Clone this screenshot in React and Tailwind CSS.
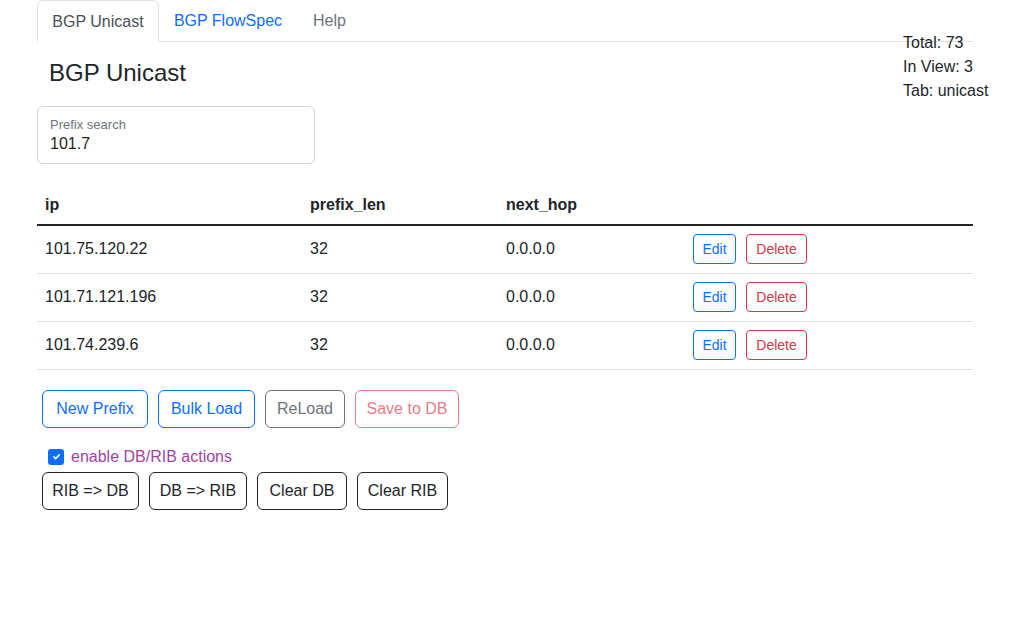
import React from 'react';

const rows = [
  { ip: '101.75.120.22', len: 32, hop: '0.0.0.0' },
  { ip: '101.71.121.196', len: 32, hop: '0.0.0.0' },
  { ip: '101.74.239.6', len: 32, hop: '0.0.0.0' },
];

const App = () => {
  return (
    <div className="relative min-h-[628px] bg-white text-[#212529] text-[16px] leading-6" style={{ fontFamily: '"Liberation Sans", Arial, sans-serif' }}>
      <div className="absolute left-[903px] top-[31px] leading-6">
        <div>Total: 73</div>
        <div>In View: 3</div>
        <div>Tab: unicast</div>
      </div>

      <div className="ml-[37px] w-[936px]">
        {/* tabs */}
        <div className="flex border-b border-[#dee2e6] h-[42px]">
          <div className="-mb-px w-[122px] h-[42px] pt-px flex items-center justify-center border border-[#dee2e6] border-b-white rounded-t-md text-[#495057] bg-white">BGP Unicast</div>
          <div className="w-[138px] h-[41px] pt-px flex items-center justify-center text-[#0d6efd]">BGP FlowSpec</div>
          <div className="h-[41px] pt-px px-4 flex items-center text-[#6c757d]">Help</div>
        </div>

        <h4 className="pl-3 mt-[17px] text-[24px] leading-[28px] font-medium">BGP Unicast</h4>

        <div className="mt-[19px] w-[278px] h-[58px] border border-[#ced4da] rounded-md px-3 pt-[10px]">
          <div className="text-[13px] leading-4 text-[#6c757d]">Prefix search</div>
          <div className="text-[16px] leading-6 -mt-[1px]">101.7</div>
        </div>

        {/* table */}
        <table className="mt-[21px] w-full border-collapse">
          <thead>
            <tr className="border-b-2 border-[#212529]">
              <th className="w-[265px] h-[40px] px-2 text-left font-bold">ip</th>
              <th className="w-[196px] px-2 text-left font-bold">prefix_len</th>
              <th className="w-[187px] px-2 text-left font-bold">next_hop</th>
              <th className="px-2"></th>
            </tr>
          </thead>
          <tbody>
            {rows.map((r) => (
              <tr key={r.ip} className="border-b border-[#dee2e6]">
                <td className="h-[48px] px-2">{r.ip}</td>
                <td className="px-2">{r.len}</td>
                <td className="px-2">{r.hop}</td>
                <td className="px-2">
                  <div className="flex gap-[10px]">
                    <button className="w-[43px] h-[30px] text-[14px] leading-5 border border-[#0d6efd] text-[#0d6efd] rounded">Edit</button>
                    <button className="w-[61px] h-[30px] text-[14px] leading-5 border border-[#dc3545] text-[#dc3545] rounded">Delete</button>
                  </div>
                </td>
              </tr>
            ))}
          </tbody>
        </table>

        <div className="mt-[20px] flex gap-[10px] pl-[5px]">
          <button className="w-[106px] h-[38px] border border-[#0d6efd] text-[#0d6efd] rounded-md">New Prefix</button>
          <button className="w-[97px] h-[38px] border border-[#0d6efd] text-[#0d6efd] rounded-md">Bulk Load</button>
          <button className="w-[80px] h-[38px] border border-[#6c757d] text-[#6c757d] rounded-md">ReLoad</button>
          <button className="w-[104px] h-[38px] border border-[#dc3545] text-[#dc3545] rounded-md opacity-65">Save to DB</button>
        </div>

        <div className="mt-[21px] ml-[11px] flex items-center gap-[7px] h-[16px]">
          <span className="w-4 h-4 rounded-[3px] bg-[#0d6efd] flex items-center justify-center">
            <svg width="11" height="11" viewBox="0 0 20 20" fill="none"><path d="M5 10.5l3.5 3.5 6.5-7" stroke="#fff" strokeWidth="3" strokeLinecap="round" strokeLinejoin="round" /></svg>
          </span>
          <span className="text-[#a044a4]">enable DB/RIB actions</span>
        </div>

        <div className="mt-[7px] flex gap-[10px] pl-[5px]">
          <button className="w-[97px] h-[38px] border border-[#212529] text-[#212529] rounded-md">RIB =&gt; DB</button>
          <button className="w-[98px] h-[38px] border border-[#212529] text-[#212529] rounded-md">DB =&gt; RIB</button>
          <button className="w-[90px] h-[38px] border border-[#212529] text-[#212529] rounded-md">Clear DB</button>
          <button className="w-[91px] h-[38px] border border-[#212529] text-[#212529] rounded-md">Clear RIB</button>
        </div>
      </div>
    </div>
  );
};

export default App;
